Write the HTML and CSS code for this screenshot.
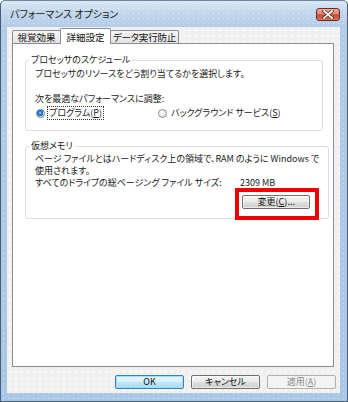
FILE: index.html
```html
<!DOCTYPE html>
<html lang="ja">
<head>
<meta charset="utf-8">
<title>パフォーマンス オプション</title>
<link rel="stylesheet" href="styles.css">
</head>
<body>
<div class="window">
  <div class="titlebar">
    <span class="title">パフォーマンス オプション</span>
    <span class="close">
      <svg width="12" height="9" viewBox="0 0 12 9"><path d="M2 1 L10 8 M10 1 L2 8" stroke="#5a1e16" stroke-width="3.2" stroke-linecap="square"/><path d="M2 1 L10 8 M10 1 L2 8" stroke="#fff" stroke-width="1.8" stroke-linecap="square"/></svg>
    </span>
  </div>
  <div class="client">
    <div class="tabs">
      <span class="tab">視覚効果</span>
      <span class="tab selected">詳細設定</span>
      <span class="tab wide">データ実行防止</span>
    </div>
    <div class="panel">
      <fieldset class="group first">
        <legend>プロセッサのスケジュール</legend>
        <p class="line l1">プロセッサのリソースをどう割り当てるかを選択します。</p>
        <p class="line l2">次を最適なパフォーマンスに調整:</p>
        <div class="radios">
          <span class="radio-item r1"><span class="radio checked"></span><span class="rlabel focus">プログラム(<u>P</u>)</span></span>
          <span class="radio-item r2"><span class="radio"></span><span class="rlabel">バックグラウンド サービス(<u>S</u>)</span></span>
        </div>
      </fieldset>
      <fieldset class="group second">
        <legend>仮想メモリ</legend>
        <p class="para">ページ ファイルとはハードディスク上の領域で、RAM のように Windows で<br>使用されます。</p>
        <div class="sizerow"><span class="sizelabel">すべてのドライブの総ページング ファイル サイズ:</span><span class="sizeval">2309 MB</span></div>
        <div class="btnrow">
          <span class="btnwrap">
            <span class="btn change">変更(<u>C</u>)...</span>
            <span class="mark"></span>
          </span>
        </div>
      </fieldset>
    </div>
    <div class="buttons">
      <span class="btn default">OK</span>
      <span class="btn">キャンセル</span>
      <span class="btn disabled">適用(<u>A</u>)</span>
    </div>
  </div>
</div>
</body>
</html>
```
FILE: styles.css
```css
html, body {
  margin: 0;
  padding: 0;
}
body {
  width: 348px;
  height: 402px;
  overflow: hidden;
  font-family: "Noto Sans CJK JP", "Noto Sans", sans-serif;
  font-feature-settings: "palt";
  font-size: 9px;
  color: #1a1a1a;
}
.window {
  box-sizing: border-box;
  width: 348px;
  height: 402px;
  border: 1px solid #4a5d78;
  border-top-color: #6f86a3;
  border-radius: 5px 5px 0 0;
  padding: 0 7px 8px 6px;
  display: flex;
  flex-direction: column;
  background-color: #aac8e6;
  background-image:
    radial-gradient(rgba(255,255,255,0.45) 0.7px, transparent 1px),
    linear-gradient(#dbe7f4 0, #c2d7ec 12px, #b2cce8 26px, #a9c7e6 100%);
  background-size: 5px 5px, 100% 100%;
}
.titlebar {
  height: 26px;
  display: flex;
  justify-content: space-between;
  align-items: flex-start;
}
.title {
  margin-left: 3px;
  margin-top: 6px;
  font-size: 10px;
  line-height: 14px;
  color: #222;
}
.close {
  margin-top: 7px;
  width: 22px;
  height: 11px;
  border: 1px solid #6c2b22;
  border-radius: 3px;
  background: linear-gradient(#eab0a3 0, #d98272 45%, #c24a36 55%, #d5775f 100%);
  display: flex;
  align-items: center;
  justify-content: center;
}
.close svg { display: block; }
.client {
  flex: 1;
  display: flex;
  flex-direction: column;
  padding: 1px 4px 4px 5px;
  background-color: #f0f0f0;
  background-image: radial-gradient(#ffffff 0.6px, transparent 0.9px);
  background-size: 6px 6px;
}
.tabs {
  height: 15px;
  display: flex;
  align-items: flex-end;
}
.tab {
  box-sizing: border-box;
  height: 13px;
  width: 49px;
  border: 1px solid #898c95;
  border-bottom: none;
  border-radius: 2px 2px 0 0;
  background: linear-gradient(#f6f6f6, #e3e3e3);
  font-size: 9.5px;
  line-height: 12px;
  text-align: center;
  white-space: nowrap;
  color: #111;
}
.tab + .tab { margin-left: -1px; }
.tab.selected {
  height: 16px;
  width: 51px;
  margin-bottom: -1px;
  background: #fff;
  position: relative;
  z-index: 1;
  line-height: 16px;
}
.tab.wide { width: 69px; letter-spacing: -0.2px; }
.panel {
  flex: 1;
  margin-right: 2px;
  border: 1px solid #898c95;
  background: #fff;
  padding: 0 10px 0 12px;
}
.group {
  margin: 0;
  padding: 0 9px 0 9px;
  border: 1px solid #d5dfe5;
  border-radius: 3px;
}
.group legend {
  margin-left: -6px;
  padding: 0 2px;
  line-height: 12px;
  color: #1a1a1a;
}
.group.first { margin-top: 10px; padding-bottom: 10px; }
.group.second { margin-top: 9px; padding-bottom: 9px; }
.line {
  margin: 0;
  line-height: 12px;
  white-space: nowrap;
}
.l1 { margin-top: 2px; }
.l2 { margin-top: 13px; }
.radios {
  margin-top: 1px;
  height: 14px;
  display: flex;
  align-items: center;
}
.radio-item {
  display: flex;
  align-items: center;
}
.r1 { margin-left: 1px; }
.r2 { margin-left: 54px; }
.radio {
  box-sizing: border-box;
  width: 9px;
  height: 9px;
  border-radius: 50%;
  border: 1px solid #8a8a8a;
  background: radial-gradient(circle at 40% 35%, #ffffff, #dcdcdc);
  margin-right: 2px;
}
.radio.checked {
  border-color: #5a7ea6;
  background: radial-gradient(circle at 45% 40%, #9fd6fb 0, #2f86d4 1.6px, #1b5a9e 3px, #e9eef3 3.4px, #cfd6dd 100%);
}
.rlabel {
  line-height: 12px;
  padding: 0 1px;
  border: 1px solid transparent;
  white-space: nowrap;
}
.rlabel.focus { border: 1px dotted #333; }
.para {
  margin: 1px 0 0;
  line-height: 12px;
  white-space: nowrap;
}
.sizerow {
  margin-top: 0;
  display: grid;
  grid-template-columns: 205px auto;
  line-height: 12px;
  white-space: nowrap;
}
.btnrow {
  margin-top: 6px;
  display: flex;
  justify-content: flex-end;
  padding-right: 9px;
}
.btnwrap {
  position: relative;
  display: flex;
}
.btn {
  box-sizing: border-box;
  width: 69px;
  height: 14px;
  border: 1px solid #707070;
  border-radius: 2px;
  background: linear-gradient(#f3f3f3 0, #ececec 45%, #dddddd 55%, #cfcfcf 100%);
  box-shadow: inset 0 0 0 1px rgba(255,255,255,0.6);
  text-align: center;
  line-height: 12px;
  font-size: 9px;
  color: #111;
}
.btn.change { width: 68px; }
.mark {
  position: absolute;
  left: -7px;
  top: -7px;
  right: -9px;
  bottom: -11px;
  border: 4px solid #f00000;
}
.buttons {
  margin-top: 8px;
  height: 14px;
  display: flex;
  justify-content: flex-end;
  gap: 7px;
}
.btn.default {
  border-color: #3c7fb1;
  background: linear-gradient(#eaf6fd 0, #d9f0fc 45%, #bee6fd 55%, #a7d9f5 100%);
  box-shadow: inset 0 0 0 1px #9fe0ff;
}
.btn.disabled {
  border-color: #adb2b5;
  background: #f4f4f4;
  box-shadow: none;
  color: #8d8d8d;
}
```
